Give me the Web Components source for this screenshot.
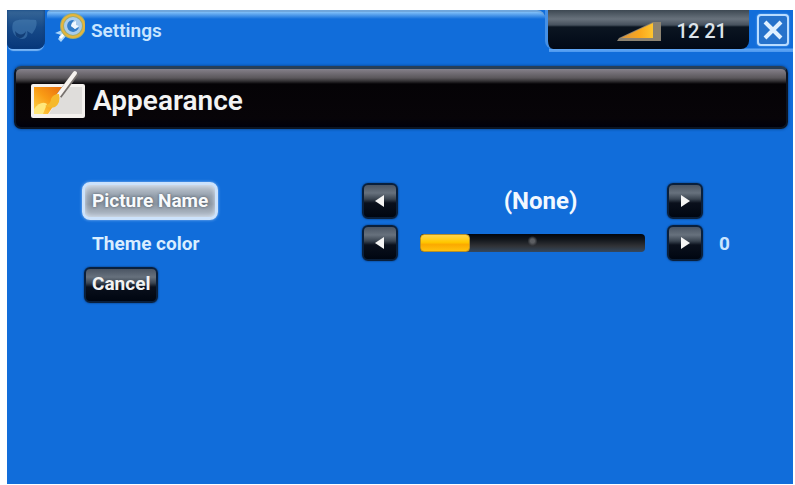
<!DOCTYPE html>
<html lang="en">
<head>
<meta charset="utf-8">
<title>Settings</title>
<style>
    body {
        margin: 0;
        padding: 10px 2px 1px 7px;
        min-height: 100vh;
        box-sizing: border-box;
        display: flex;
        background: white;
        color: white;
        font-family: Roboto, "Liberation Sans", sans-serif;
        font-weight: 700;
    }
</style>
</head>
<body>
<settings-window>
    <top-bar slot="top" time="12 21">Settings</top-bar>
    <title-bar slot="title">Appearance</title-bar>
    <choice-row value="(None)">Picture Name</choice-row>
    <slider-row value="0" label="Theme color"></slider-row>
    <glossy-button>Cancel</glossy-button>
</settings-window>

<script>
class SettingsWindow extends HTMLElement {
    constructor() {
        super();
        this.attachShadow({ mode: 'open' });
        this.shadowRoot.innerHTML = `
            <style>
                :host {
                    display: flex;
                    flex-direction: column;
                    flex: 1;
                    background: #116dda;
                }

                main {
                    display: flex;
                    flex-direction: column;
                    gap: 6px;
                    padding: 54px 16px 52px 77px;
                }
            </style>

            <slot name="top"></slot>
            <slot name="title"></slot>
            <main><slot></slot></main>
        `;
    }
}

class TopBar extends HTMLElement {
    constructor() {
        super();
        this.attachShadow({ mode: 'open' });
        this.shadowRoot.innerHTML = `
            <style>
                :host {
                    display: flex;
                    height: 42px;
                }

                #menu {
                    width: 38px;
                    height: 39px;
                    padding: 0;
                    border: 0;
                    border-radius: 0 0 8px 6px;
                    background: linear-gradient(#386797, #174a88 45%, #07377a);
                    box-shadow: inset 0 0 3px #0b3c7c, 0 3px 1px -1px #79b5f5;
                }

                #tab {
                    flex: 1;
                    display: flex;
                    align-items: flex-start;
                    gap: 6px;
                    margin-left: 2px;
                    padding-left: 7px;
                    border-top: 2px solid #6fa6dc;
                    border-radius: 4px 8px 0 0;
                    background: linear-gradient(#82c0f8, #116dda 7px);
                }

                h1 {
                    margin: 0;
                    padding-top: 8px;
                    font-size: 19px;
                    line-height: 22px;
                    color: #c9e5ff;
                    font-weight: 600;
                }

                #right {
                    display: flex;
                    align-items: flex-start;
                    justify-content: space-between;
                    width: 248px;
                    box-sizing: border-box;
                    padding: 0 4px 3px 0;
                    background: linear-gradient(transparent 38px, #62a8f5 39px, #4c98ef) 4px 0 no-repeat;
                }

                #status {
                    display: flex;
                    align-items: center;
                    justify-content: flex-end;
                    gap: 16px;
                    box-sizing: border-box;
                    width: 204px;
                    height: 39px;
                    padding: 3px 22px 0 0;
                    border-left: 3px solid #4590e6;
                    border-radius: 0 0 8px 8px;
                    background: linear-gradient(#3d4852, #68727c 9px, #46515d 15px, #0b1521 17px, #010916);
                    font-size: 20px;
                    font-weight: 500;
                    color: #dde4ea;
                }

                #close {
                    width: 32px;
                    height: 32px;
                    margin-top: 4px;
                    padding: 0;
                    border: 2px solid #b9dcff;
                    border-radius: 4px;
                    background: #2672cb;
                    box-shadow: 0 0 2px #76b5f7;
                }

                svg { display: block; }
            </style>

            <button id="menu" aria-label="Back">
                <svg width="38" height="38" viewBox="0 0 38 38">
                    <path d="M6 12C9 7 22 9 29 9C31 14 28 19 25 23L20 20C22 26 17 30 12 27C6 25 4 18 6 12Z" fill="#4d86ba" opacity=".5"/>
                    <path d="M8 20C12 25 17 24 19 20C18 27 13 29 9 25Z" fill="#123e77"/>
                </svg>
            </button>
            <div id="tab">
                <svg width="31" height="34" viewBox="0 0 31 34">
                    <path d="M1 21L8 18L12 14L18 20L13 23L7 30L4 27L7 23Z" fill="#a9d5fb"/>
                    <path d="M6 26L12 20" stroke="#fff" stroke-width="3"/>
                    <circle cx="19" cy="14" r="11" fill="#a9ccec" stroke="#9dad73" stroke-width="4"/>
                    <circle cx="19" cy="14" r="11" fill="none" stroke="#e7b53a" stroke-width="2"/>
                    <path d="M20 8A6 6 0 1 0 25 15L21 17L17 14L18 11Z" fill="#337dc8"/>
                    <path d="M18 11L22 9V13L25 14L21 17L17 14Z" fill="#f0f8ff"/>
                </svg>
                <h1><slot></slot></h1>
            </div>
            <div id="right">
                <div id="status">
                    <svg width="44" height="21" viewBox="0 0 44 21" role="img" aria-label="Volume">
                        <defs>
                            <linearGradient id="gold" x2="1">
                                <stop stop-color="#d99541"/>
                                <stop offset=".6" stop-color="#fba91c"/>
                                <stop offset="1" stop-color="#ffc530"/>
                            </linearGradient>
                        </defs>
                        <path d="M0 20L2 17L36 1H44V20Z" fill="#8c8372"/>
                        <path d="M4 17L36 2V17Z" fill="url(#gold)"/>
                    </svg>
                    <time></time>
                </div>
                <button id="close" aria-label="Close">
                    <svg width="28" height="28" viewBox="0 0 28 28">
                        <path d="M6 6L22 22M22 6L6 22" stroke="#e0f0ff" stroke-width="4"/>
                    </svg>
                </button>
            </div>
        `;
        this.shadowRoot.querySelector('time').textContent = this.getAttribute('time');
    }
}

class TitleBar extends HTMLElement {
    constructor() {
        super();
        this.attachShadow({ mode: 'open' });
        this.shadowRoot.innerHTML = `
            <style>
                :host {
                    display: flex;
                    gap: 8px;
                    box-sizing: border-box;
                    height: 63px;
                    margin: 14px 5px 0 7px;
                    padding-left: 15px;
                    border: 2px solid #0b1524;
                    border-top: 3px solid #283f57;
                    border-radius: 7px;
                    background: linear-gradient(#85808a, #5a575b 9px, #343235 12px, #050306 15px, #070408 85%, #00000c);
                    box-shadow: 0 0 3px #06336e;
                }

                h2 {
                    margin: 0;
                    padding-top: 16px;
                    font-size: 28px;
                    line-height: 32px;
                    font-weight: 600;
                    color: #f3f3f3;
                }
            </style>

            <svg width="54" height="52" viewBox="0 0 54 52">
                <defs>
                    <linearGradient id="photo" x1="1" x2="0" y2="1">
                        <stop stop-color="#e86b10"/>
                        <stop offset=".5" stop-color="#f99b14"/>
                        <stop offset="1" stop-color="#ffd94c"/>
                    </linearGradient>
                </defs>
                <rect y="15" width="54" height="34" rx="2" fill="#f4f1ee"/>
                <path d="M34 18H51V45H18Z" fill="#dfdddb"/>
                <path d="M3 18H33L25 33L17 45H3Z" fill="url(#photo)"/>
                <path d="M3 40Q10 31 16 35L12 45H3Z" fill="#ffe77b"/>
                <path d="M45 4L28 27" stroke="#77716e" stroke-width="6"/>
                <path d="M44 4L27 27" stroke="#f6f2ef" stroke-width="4" stroke-linecap="round"/>
                <path d="M28 25Q30 34 24 38Q19 40 14 37Q20 35 20 30Q22 25 28 25Z" fill="#f6b92c"/>
            </svg>
            <h2><slot></slot></h2>
        `;
    }
}

class GlossyButton extends HTMLElement {
    constructor() {
        super();
        this.attachShadow({ mode: 'open' });
        this.shadowRoot.innerHTML = `
            <style>
                :host {
                    display: flex;
                }

                button {
                    min-width: 36px;
                    height: 36px;
                    padding: 0 6px 3px;
                    border: 2px solid #0a203c;
                    border-radius: 6px;
                    background: linear-gradient(#4b5563, #67717d 8px, #3b4551 14px, #0a101c 18px, #000611);
                    box-shadow: 0 0 2px #052b60;
                    color: #f2f2f2;
                    font: inherit;
                    font-size: 19px;
                }

                :host([selected]) button {
                    height: 38px;
                    margin: -1px 0 -1px -2px;
                    padding: 0 7px 1px;
                    border: 3px solid #cce2fb;
                    border-radius: 8px;
                    background: linear-gradient(#c2cad4, #949fac 35%, #8c96a2 60%, #b6c0cc);
                    box-shadow: 0 0 3px #8cbcf2, inset 0 0 5px #dae7f5;
                    color: #f8fafc;
                    text-shadow: 0 0 3px #4d5864;
                }

                :host([arrow]) button {
                    display: flex;
                    align-items: center;
                    justify-content: center;
                    width: 36px;
                    padding: 0;
                }

                svg { display: block; }
            </style>

            <button><slot></slot></button>
        `;
        const arrow = this.getAttribute('arrow');
        if (arrow) {
            const path = arrow === 'left' ? 'M13 2V14L4 8Z' : 'M5 2V14L14 8Z';
            const btn = this.shadowRoot.querySelector('button');
            btn.setAttribute('aria-label', arrow === 'left' ? 'Previous' : 'Next');
            btn.innerHTML = `<svg width="18" height="16" viewBox="0 0 18 16"><path d="${path}" fill="#f4f4f4"/></svg>`;
        }
    }
}

// shared by both kinds of row
const rowStyle = `
    :host {
        display: grid;
        grid-template-columns: minmax(0, 278fr) 36px minmax(0, 269fr) 36px 74px;
        align-items: center;
        height: 36px;
    }

    output {
        font-size: 24px;
        text-align: center;
        color: #f2f8ff;
    }
`;

class ChoiceRow extends HTMLElement {
    constructor() {
        super();
        this.attachShadow({ mode: 'open' });
        this.shadowRoot.innerHTML = `
            <style>
                ${rowStyle}

                output {
                    padding-left: 16px;
                }
            </style>

            <glossy-button selected><slot></slot></glossy-button>
            <glossy-button arrow="left"></glossy-button>
            <output></output>
            <glossy-button arrow="right"></glossy-button>
        `;
        this.shadowRoot.querySelector('output').textContent = this.getAttribute('value');
    }
}

class SliderRow extends HTMLElement {
    constructor() {
        super();
        this.attachShadow({ mode: 'open' });
        this.shadowRoot.innerHTML = `
            <style>
                ${rowStyle}

                label {
                    padding-left: 8px;
                    font-size: 19px;
                    color: #d9edff;
                }

                output {
                    padding-left: 16px;
                    font-size: 19px;
                    text-align: left;
                    color: #c9e5ff;
                }

                input {
                    appearance: none;
                    height: 18px;
                    margin: 0 22px;
                    border-radius: 4px;
                    background:
                        radial-gradient(circle at 50% 7px, #5c5e62 2px, transparent 5px),
                        linear-gradient(#02060e, #10141a 5px, #303236 12px, #34485f);
                }

                input::-webkit-slider-thumb {
                    appearance: none;
                    width: 50px;
                    height: 18px;
                    border: 1px solid #b58f28;
                    border-radius: 4px;
                    background: linear-gradient(#ffd44a, #ffc800 45%, #fba900 60%, #ffc20c);
                }
            </style>

            <label for="range"></label>
            <glossy-button arrow="left"></glossy-button>
            <input id="range" type="range" min="0" max="100">
            <glossy-button arrow="right"></glossy-button>
            <output for="range"></output>
        `;

        const input = this.shadowRoot.querySelector('input');
        const output = this.shadowRoot.querySelector('output');
        this.shadowRoot.querySelector('label').textContent = this.getAttribute('label');
        input.value = this.getAttribute('value');
        output.textContent = input.value;

        input.addEventListener('input', () => {
            output.textContent = input.value;
        });
    }
}

customElements.define('glossy-button', GlossyButton);
customElements.define('settings-window', SettingsWindow);
customElements.define('top-bar', TopBar);
customElements.define('title-bar', TitleBar);
customElements.define('choice-row', ChoiceRow);
customElements.define('slider-row', SliderRow);
</script>
</body>
</html>
